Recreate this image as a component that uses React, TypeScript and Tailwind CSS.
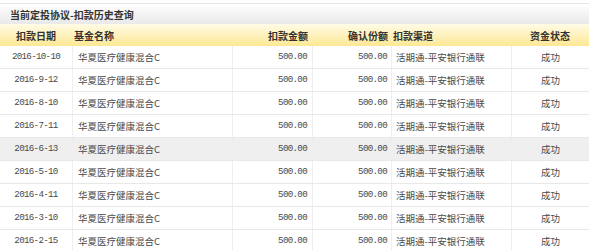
import React from 'react'

type Row = { date: string; name: string; amount: string; shares: string; channel: string; status: string }

const dates = ['2016-10-10', '2016-9-12', '2016-8-10', '2016-7-11', '2016-6-13', '2016-5-10', '2016-4-11', '2016-3-10', '2016-2-15']

const rows: Row[] = dates.map((d) => ({
    date: d,
    name: '华夏医疗健康混合C',
    amount: '500.00',
    shares: '500.00',
    channel: '活期通-平安银行通联',
    status: '成功',
}))

const cols = 'grid grid-cols-[72px_160px_80px_79px_120px_78px]'
const cjk = "font-['Noto_Sans_CJK_SC',sans-serif] text-[9.5px]"
const mono = "font-['Liberation_Mono','Noto_Sans_CJK_SC',monospace] text-[9.2px] tracking-[-0.7px]"
const cell = 'flex items-center border-l border-[#eeeeee] first:border-l-0'

const App = () => {
    return (
        <div className="w-[600px] h-[250px] bg-white overflow-hidden text-[#4a4a4a]">
            <div className="w-[589px] pt-[3px]">
                {/* Title bar */}
                <div className={`h-[21px] flex items-center pl-[10px] border-t border-[#e6e6e6] bg-gradient-to-b from-white to-[#e9e9e9] font-bold text-[#333] ${cjk} text-[10px]`}>
                    当前定投协议-扣款历史查询
                </div>

                {/* Header */}
                <div className={`${cols} h-[22px] bg-gradient-to-b from-[#fffbe6] to-[#fde893] font-bold text-[#333] ${cjk} text-[10px]`}>
                    <div className="flex items-center justify-center">扣款日期</div>
                    <div className="flex items-center pl-[2px]">基金名称</div>
                    <div className="flex items-center justify-end pr-[4px]">扣款金额</div>
                    <div className="flex items-center justify-end pr-[3px]">确认份额</div>
                    <div className="flex items-center pl-[2px]">扣款渠道</div>
                    <div className="flex items-center justify-center">资金状态</div>
                </div>

                {/* Rows */}
                {rows.map((r, i) => (
                    <div key={i} className={`${cols} h-[23px] border-b border-[#e8e8e8] ${i === 4 ? 'bg-[#efefef]' : 'bg-white'}`}>
                        <div className={`${cell} justify-center ${mono}`}>{r.date}</div>
                        <div className={`${cell} pl-[5px] ${cjk}`}>{r.name}</div>
                        <div className={`${cell} justify-end pr-[5px] ${mono}`}>{r.amount}</div>
                        <div className={`${cell} justify-end pr-[4px] ${mono}`}>{r.shares}</div>
                        <div className={`${cell} pl-[4px] ${cjk}`}>{r.channel}</div>
                        <div className={`${cell} justify-center ${cjk}`}>{r.status}</div>
                    </div>
                ))}
            </div>
        </div>
    )
}

export default App
